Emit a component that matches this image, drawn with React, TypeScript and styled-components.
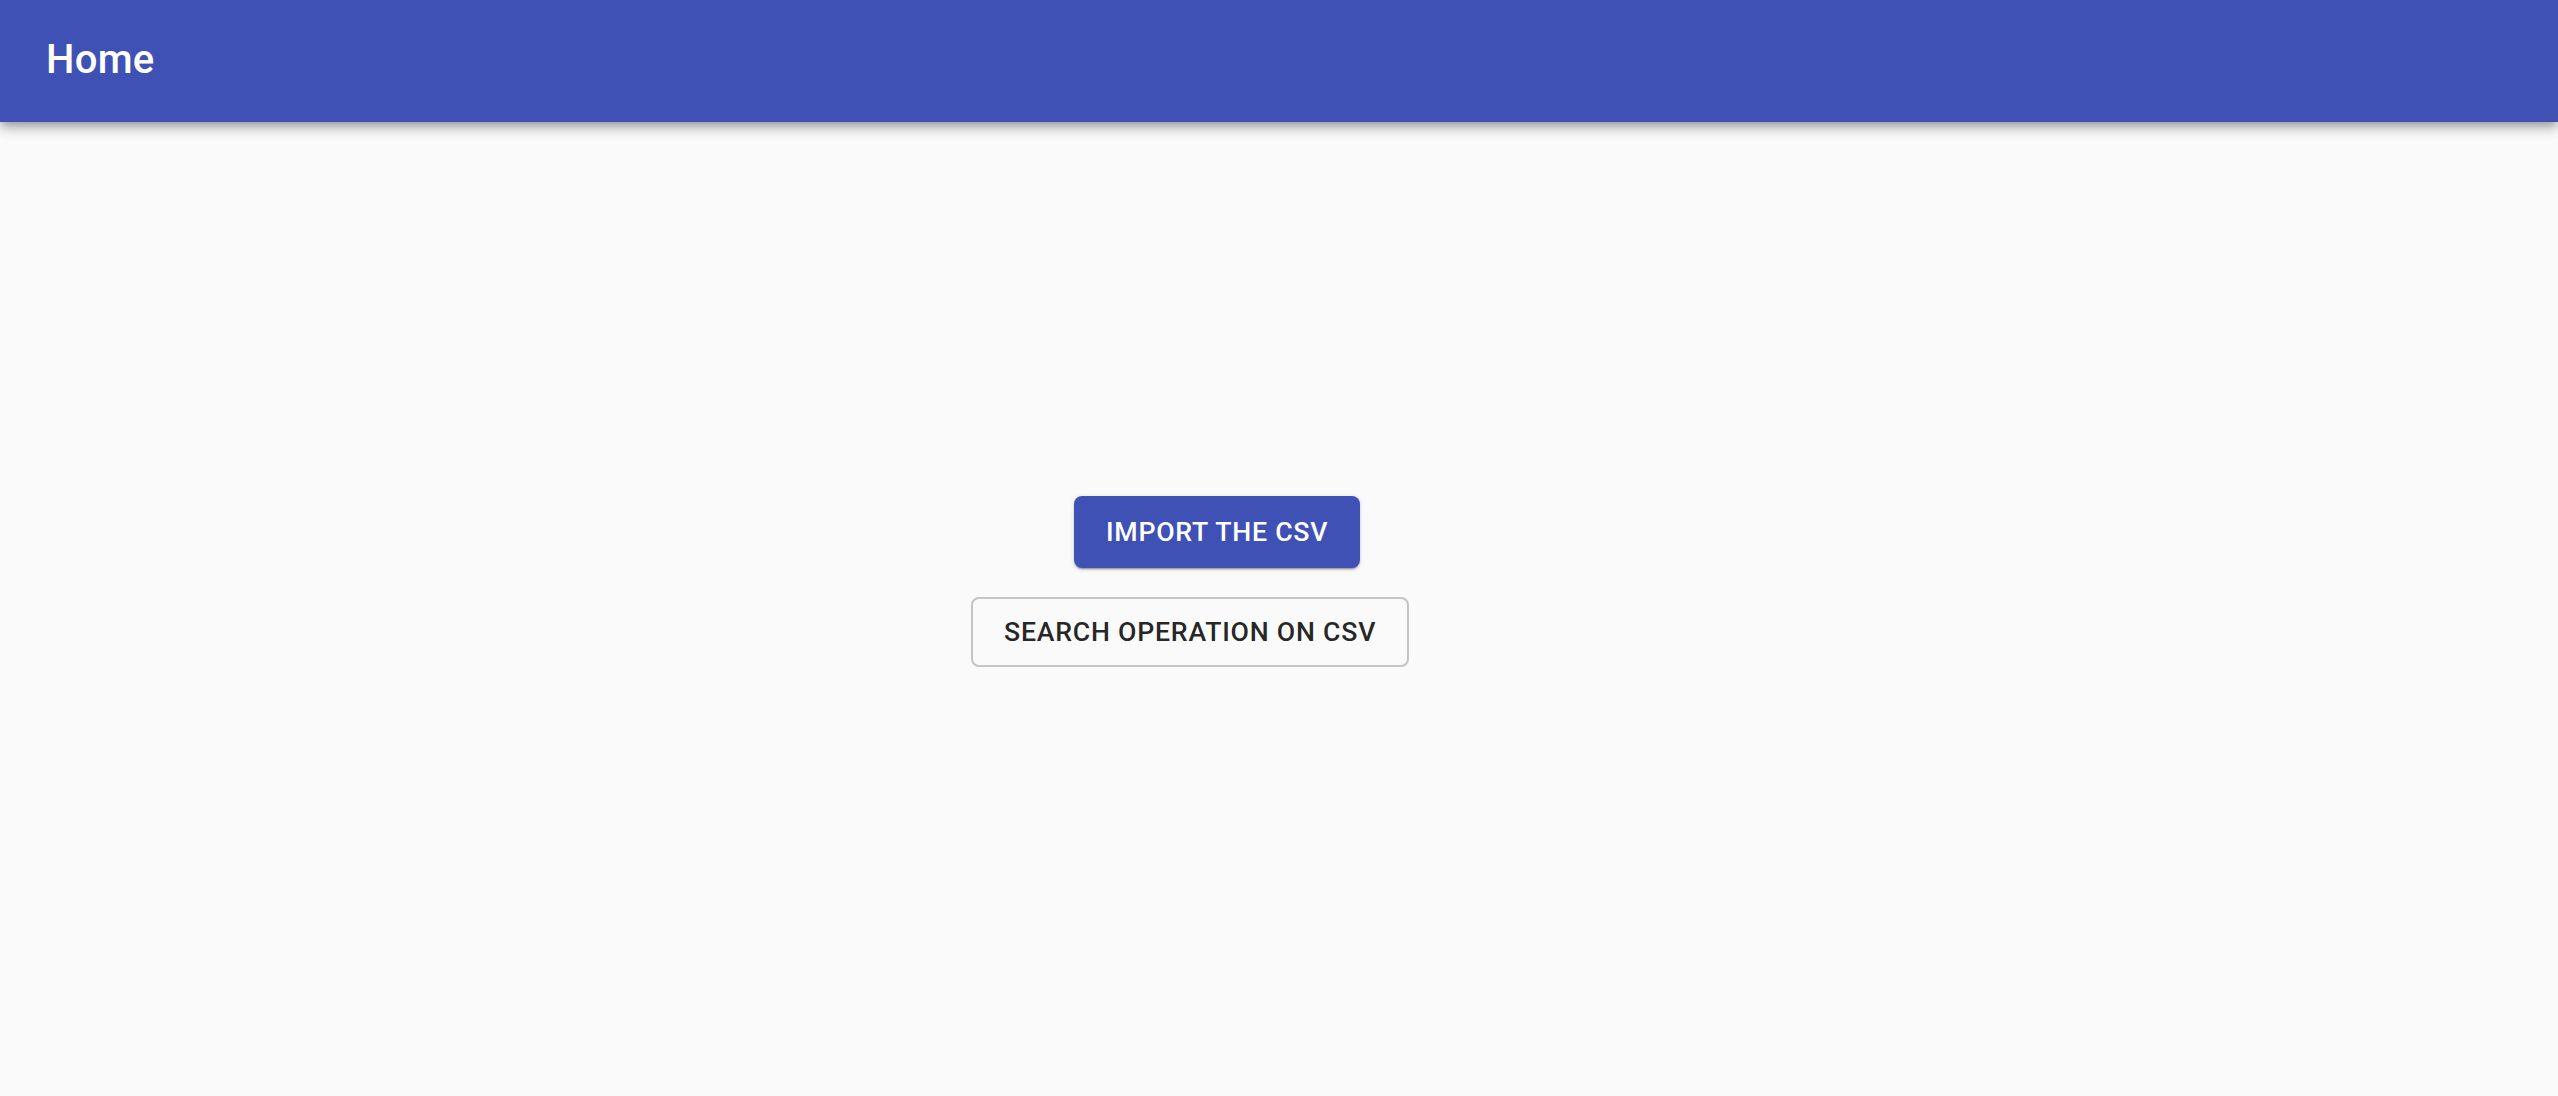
import React from "react";
import styled, { createGlobalStyle } from "styled-components";

const GlobalStyle = createGlobalStyle`
  html, body {
    margin: 0;
    padding: 0;
    background: #fafafa;
    font-family: Roboto, "Liberation Sans", Arial, sans-serif;
  }
  * { box-sizing: border-box; }
`;

const Page = styled.div`
  min-height: 1096px;
  display: flex;
  flex-direction: column;
  background: #fafafa;
`;

const AppBar = styled.header`
  height: 122px;
  background: #3f51b5;
  color: #fff;
  display: flex;
  align-items: center;
  padding: 0 46px 2px;
  box-shadow: 0 4px 8px -2px rgba(0, 0, 0, 0.22), 0 8px 10px 0 rgba(0, 0, 0, 0.15), 0 2px 18px 0 rgba(0, 0, 0, 0.12);
  position: relative;
  z-index: 1;
`;

const Title = styled.h1`
  margin: 0;
  font-family: Roboto, "Liberation Sans", sans-serif;
  font-weight: 500;
  font-size: 40px;
  line-height: 1.6;
  letter-spacing: 0.0075em;
`;

const Actions = styled.main`
  display: flex;
  flex-direction: column;
  align-items: flex-start;
  gap: 29px;
  padding: 374px 0 0 971px;
`;

const Button = styled.button<{ $variant: "contained" | "outlined"; $offset?: number }>`
  font-family: Roboto, "Liberation Sans", sans-serif;
  font-weight: 500;
  font-size: 26.7px;
  letter-spacing: 0.02857em;
  text-transform: uppercase;
  line-height: 1;
  border-radius: 8px;
  cursor: pointer;
  margin-left: ${(p) => p.$offset ?? 0}px;
  ${(p) =>
    p.$variant === "contained"
      ? `
    height: 72px;
    padding: 0 32px;
    background: #3f51b5;
    color: #fff;
    border: none;
    box-shadow: 0 3px 1px -2px rgba(0,0,0,0.2), 0 2px 2px 0 rgba(0,0,0,0.14), 0 1px 5px 0 rgba(0,0,0,0.12);
  `
      : `
    height: 70px;
    padding: 0 31px;
    background: transparent;
    color: rgba(0,0,0,0.87);
    border: 2px solid #c4c4c4;
  `}
`;

export default function App() {
  return (
    <Page>
      <GlobalStyle />
      <AppBar>
        <Title>Home</Title>
      </AppBar>
      <Actions>
        <Button $variant="contained" $offset={103}>Import the CSV</Button>
        <Button $variant="outlined">Search operation on CSV</Button>
      </Actions>
    </Page>
  );
}
